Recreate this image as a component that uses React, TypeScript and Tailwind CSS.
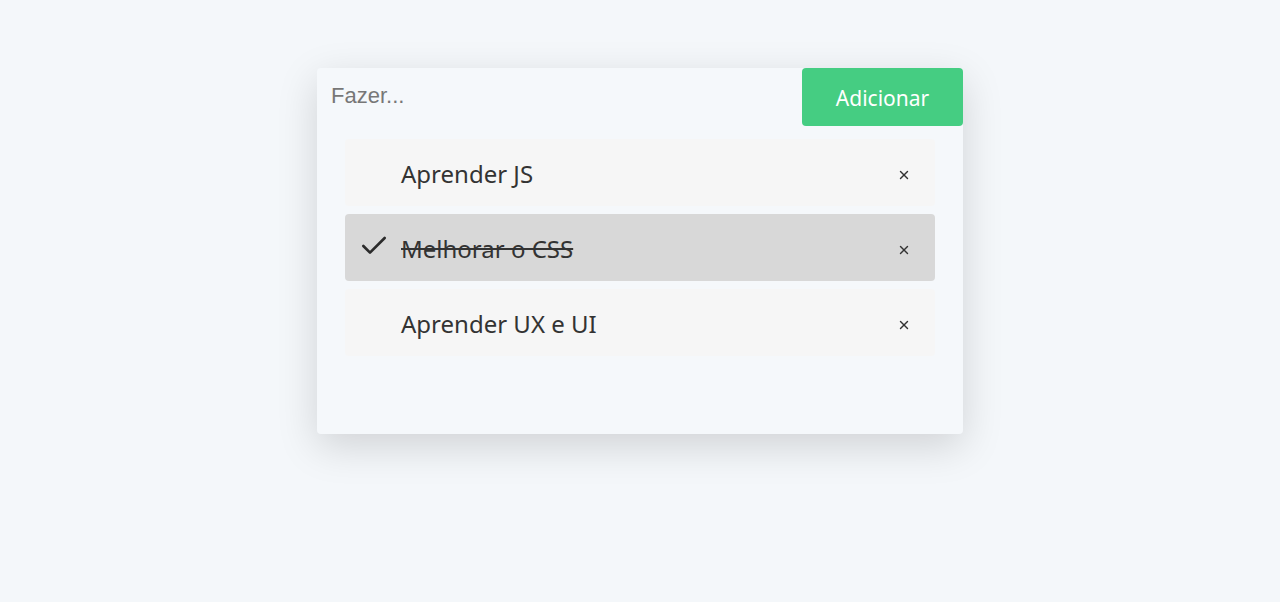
import { Check, X } from "lucide-react";

type Todo = { id: number; text: string; done: boolean };

const todos: Todo[] = [
  { id: 1, text: "Aprender JS", done: false },
  { id: 2, text: "Melhorar o CSS", done: true },
  { id: 3, text: "Aprender UX e UI", done: false },
];

function TodoItem({ todo }: { todo: Todo }) {
  return (
    <li
      className={
        "flex h-[67px] items-center rounded-[4px] pl-[13px] pr-[24px] " +
        (todo.done ? "bg-[#d8d8d8]" : "bg-[#f6f6f6]")
      }
    >
      <span className="flex w-[43px] shrink-0 items-center pb-[4px]">
        {todo.done && <Check className="h-[32px] w-[32px] text-[#2b2b2b]" strokeWidth={2} />}
      </span>
      <span
        className={
          "flex-1 pt-[2px] text-[24px] text-[#333] " +
          (todo.done ? "line-through decoration-[#333]" : "")
        }
      >
        {todo.text}
      </span>
      <X className="mt-[5px] h-[14px] w-[14px] text-[#333]" strokeWidth={2.4} />
    </li>
  );
}

export default function App() {
  return (
    <div
      className="flex min-h-[602px] justify-center bg-[#f4f7fa] pt-[68px]"
      style={{ fontFamily: '"Segoe UI", "Noto Sans", sans-serif' }}
    >
      <div className="h-[366px] w-[646px] rounded-[4px] bg-[#f5f8fb] shadow-[0_12px_40px_rgba(0,0,0,0.15)]">
        {/* Header row */}
        <div className="flex items-start">
          <input
            placeholder="Fazer..."
            className="h-[56px] flex-1 bg-transparent pl-[14px] text-[22px] text-[#333] outline-none placeholder:text-[#777]"
            style={{ fontFamily: '"Liberation Sans", Arial, sans-serif' }}
          />
          <button className="h-[58px] w-[161px] rounded-[4px] bg-[#45cd82] pt-[3px] text-[21px] text-white">
            Adicionar
          </button>
        </div>

        {/* List */}
        <ul className="mx-[28px] mt-[13px] flex flex-col gap-[8px]">
          {todos.map((t) => (
            <TodoItem key={t.id} todo={t} />
          ))}
        </ul>
      </div>
    </div>
  );
}
